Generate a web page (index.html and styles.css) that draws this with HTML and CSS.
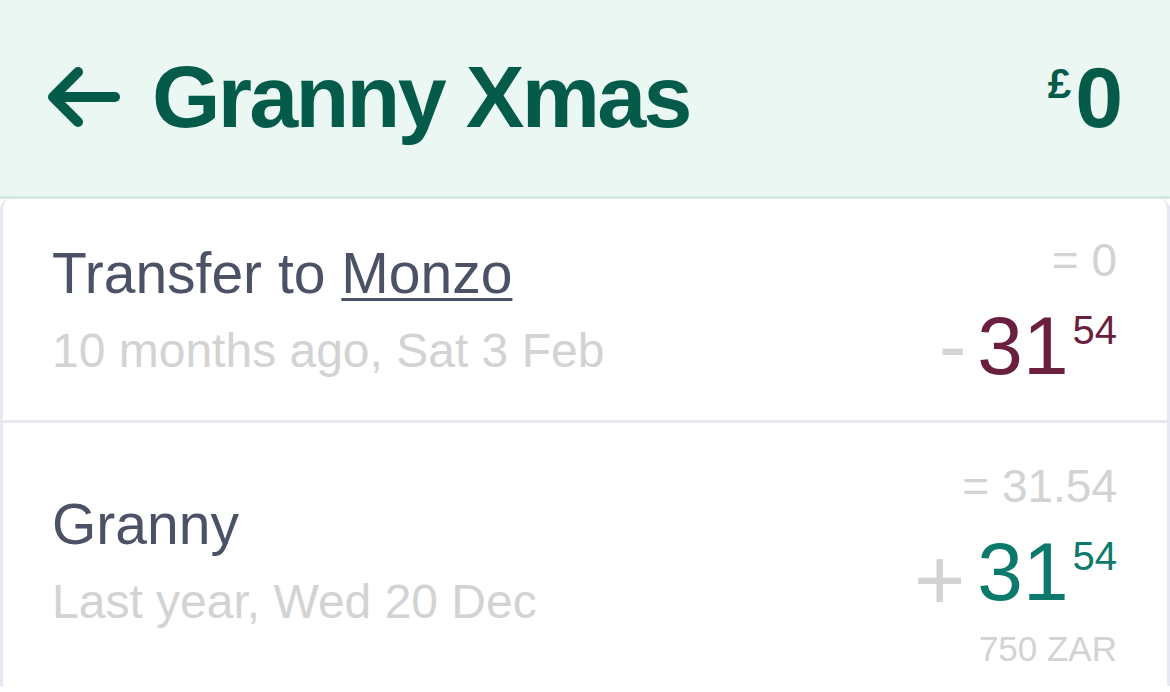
FILE: index.html
```html
<!DOCTYPE html>
<html lang="en">
<head>
<meta charset="utf-8">
<title>Granny Xmas</title>
<link rel="stylesheet" href="styles.css">
</head>
<body>
<header class="topbar">
  <button class="back" aria-label="Back">
    <svg class="back-icon" width="84" height="72" viewBox="0 0 84 72" fill="none" stroke="currentColor" stroke-width="10" stroke-linecap="round" stroke-linejoin="round">
      <path d="M75 36 H14"/>
      <path d="M38 11 L13 36 L38 61"/>
    </svg>
  </button>
  <h1 class="title">Granny Xmas</h1>
  <div class="balance"><span class="currency">£</span>0</div>
</header>
<main class="card">
  <div class="tx tx-first">
    <div class="tx-info">
      <div class="tx-name">Transfer to <span class="tx-link">Monzo</span></div>
      <div class="tx-date">10 months ago, Sat 3 Feb</div>
    </div>
    <div class="tx-amounts">
      <div class="tx-balance">= 0</div>
      <div class="tx-amount out"><span class="sign">-</span><span class="major">31</span><span class="minor">54</span></div>
    </div>
  </div>
  <div class="tx tx-second">
    <div class="tx-info">
      <div class="tx-name">Granny</div>
      <div class="tx-date">Last year, Wed 20 Dec</div>
    </div>
    <div class="tx-amounts">
      <div class="tx-balance">= 31.54</div>
      <div class="tx-amount in"><span class="sign plus">+</span><span class="major">31</span><span class="minor">54</span></div>
      <div class="tx-foreign">750 ZAR</div>
    </div>
  </div>
</main>
</body>
</html>
```
FILE: styles.css
```css
* { box-sizing: border-box; }

body {
  margin: 0;
  background: #ffffff;
  font-family: "Liberation Sans", Helvetica, Arial, sans-serif;
}

.topbar {
  display: flex;
  align-items: center;
  height: 199px;
  padding: 0 47px 2px 40px;
  background: #ebf7f3;
  border-bottom: 3px solid #d4e8e0;
  color: #045b49;
}

.back {
  display: flex;
  padding: 0;
  margin: 0 28px 0 0;
  border: 0;
  background: none;
  color: #045b49;
}

.title {
  flex: 1;
  margin: 0;
  font-size: 88px;
  line-height: 88px;
  font-weight: 700;
  letter-spacing: -2.7px;
}

.balance {
  font-size: 86px;
  line-height: 88px;
  font-weight: 700;
}

.currency {
  font-size: 42px;
  line-height: 1;
  vertical-align: 29px;
  margin-right: 4px;
}

.card {
  border-left: 3px solid #e6e8f3;
  border-right: 3px solid #e6e8f3;
  border-radius: 10px 10px 0 0;
  background: #ffffff;
}

.tx {
  display: flex;
  align-items: center;
  justify-content: space-between;
  padding: 33px 50px 17px 49px;
}

.tx-first {
  border-bottom: 3px solid #e6e8f3;
}

.tx-second {
  padding-top: 35px;
}

.tx-second .tx-info {
  margin-top: 10px;
}

.tx-name {
  font-size: 57px;
  line-height: 66px;
  color: #4b5266;
}

.tx-link {
  text-decoration: underline;
  text-decoration-thickness: 3px;
  text-underline-offset: 5px;
}

.tx-date {
  font-size: 48px;
  line-height: 90px;
  color: #d3d3d3;
}

.tx-amounts {
  text-align: right;
}

.tx-balance {
  font-size: 46px;
  line-height: 56px;
  color: #d3d3d3;
}

.tx-amount {
  font-size: 82px;
  line-height: 115px;
  white-space: nowrap;
}

.tx-amount.out { color: #6b1f3e; }
.tx-amount.in { color: #0b7a6c; }

.sign {
  color: #d3d3d3;
  margin-right: 11px;
}

.sign.plus {
  font-size: 88px;
  line-height: 1;
  vertical-align: -10px;
  margin-right: 12px;
}

.minor {
  font-size: 40px;
  line-height: 1;
  vertical-align: 30px;
  margin-left: 4px;
}

.tx-foreign {
  font-size: 35px;
  line-height: 40px;
  color: #d3d3d3;
}
```
